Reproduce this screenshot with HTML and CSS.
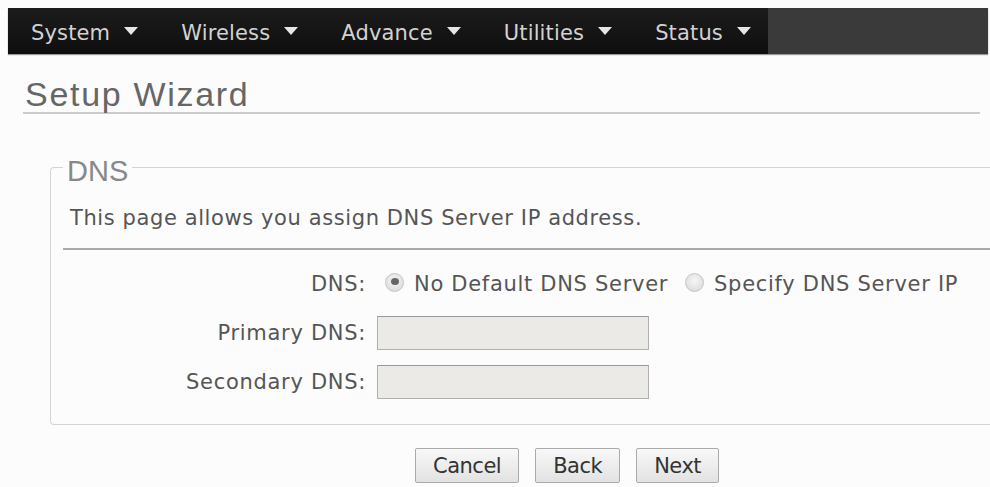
FILE: index.html
```html
<!DOCTYPE html>
<html>
<head>
<meta charset="utf-8">
<title>Setup Wizard</title>
<link rel="stylesheet" href="styles.css">
</head>
<body>
<nav class="navbar">
  <ul class="menu">
    <li class="menu-item">System<span class="caret"></span></li>
    <li class="menu-item">Wireless<span class="caret"></span></li>
    <li class="menu-item">Advance<span class="caret"></span></li>
    <li class="menu-item">Utilities<span class="caret"></span></li>
    <li class="menu-item">Status<span class="caret"></span></li>
  </ul>
</nav>
<h1 class="page-title">Setup Wizard</h1>
<fieldset class="panel">
  <legend class="panel-legend">DNS</legend>
  <p class="panel-desc">This page allows you assign DNS Server IP address.</p>
  <div class="rule"></div>
  <div class="form-grid">
    <div class="label">DNS:</div>
    <div class="radios">
      <span class="radio checked"></span><span class="radio-text">No Default DNS Server</span>
      <span class="radio"></span><span class="radio-text">Specify DNS Server IP</span>
    </div>
    <div class="label">Primary DNS:</div>
    <div class="field"><span class="input"></span></div>
    <div class="label">Secondary DNS:</div>
    <div class="field"><span class="input"></span></div>
  </div>
</fieldset>
<div class="actions">
  <button class="btn">Cancel</button>
  <button class="btn">Back</button>
  <button class="btn">Next</button>
</div>
</body>
</html>
```
FILE: styles.css
```css
html, body {
  margin: 0;
  padding: 0;
  background: #fcfcfc;
  overflow: hidden;
}
body {
  padding: 8px 2px 0 8px;
  font-family: "DejaVu Sans", Verdana, sans-serif;
  color: #555;
}
.navbar {
  height: 46px;
  background: #3a3a3a;
  display: flex;
  box-shadow: 0 1px 1px #999;
}
.menu {
  list-style: none;
  margin: 0;
  padding: 0;
  display: flex;
  background: linear-gradient(#1c1c1c, #0e0e0e);
}
.menu-item {
  font-size: 21px;
  color: #d2d2d2;
  padding: 4px 21px 0 23px;
  line-height: 42px;
  display: flex;
  align-items: center;
  letter-spacing: 0.15px;
}
.menu-item + .menu-item {
  padding-left: 22px;
}
.caret {
  width: 0;
  height: 0;
  border-left: 7px solid transparent;
  border-right: 7px solid transparent;
  border-top: 8px solid #e6e6e6;
  margin-left: 14px;
  margin-top: -4px;
}
.menu-item:last-child {
  padding-right: 17px;
}
.page-title {
  font-family: "Liberation Sans", Arial, sans-serif;
  font-weight: normal;
  font-size: 34px;
  letter-spacing: 1.7px;
  color: #666;
  line-height: 35px;
  margin: 23px 8px 0 15px;
  padding-left: 2px;
  border-bottom: 2px solid #cbcbcb;
}
.panel {
  margin: 34px -10px 0 42px;
  padding: 0 0 25px 12px;
  border: 1px solid #d4d4d4;
  border-right: none;
  border-radius: 4px 0 0 4px;
  min-width: 0;
}
.panel-legend {
  font-family: "Liberation Sans", Arial, sans-serif;
  font-size: 29px;
  line-height: 30px;
  color: #888;
  padding: 8px 4px 0 4px;
  margin-left: 0;
}
.panel-desc {
  margin: 19px 0 0 7px;
  font-size: 21px;
  line-height: 26px;
  color: #555;
  letter-spacing: 0.6px;
}
.rule {
  height: 2px;
  background: #a9a9a9;
  margin-top: 17px;
}
.form-grid {
  display: grid;
  grid-template-columns: 303px 1fr;
  column-gap: 11px;
  row-gap: 15px;
  margin-top: 17px;
}
.label {
  text-align: right;
  font-size: 21px;
  height: 34px;
  line-height: 34px;
  color: #555;
  letter-spacing: 0.7px;
}
.radios {
  display: flex;
  align-items: center;
  height: 34px;
  font-size: 21px;
  color: #555;
  letter-spacing: 0.7px;
}
.radio {
  width: 17px;
  height: 17px;
  border-radius: 50%;
  border: 1px solid #c4c4c4;
  background: radial-gradient(circle at 50% 40%, #f6f6f6, #d6d6d6);
  margin: -3px 10px 0 8px;
  position: relative;
  flex: none;
}
.radio.checked::after {
  content: "";
  position: absolute;
  left: 5px;
  top: 4px;
  width: 8px;
  height: 7px;
  border-radius: 50%;
  background: #666;
}
.radio-text {
  margin-right: 9px;
}
.field {
  height: 34px;
}
.input {
  display: block;
  width: 270px;
  height: 32px;
  background: #ebeae6;
  border: 1px solid #b0b0b0;
  border-top-color: #999;
}
.actions {
  display: flex;
  gap: 16px;
  margin: 23px 0 0 407px;
}
.btn {
  font-family: "DejaVu Sans", Verdana, sans-serif;
  font-size: 21px;
  height: 35px;
  padding: 0 17px;
  color: #333;
  background: linear-gradient(#f8f8f8, #e2e2e2);
  border: 1px solid #aaa;
  border-radius: 2px;
  letter-spacing: -0.5px;
}
```
